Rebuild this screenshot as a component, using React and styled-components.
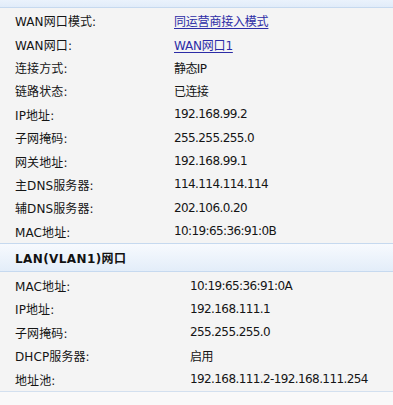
import React from "react";
import styled, { createGlobalStyle } from "styled-components";

const Global = createGlobalStyle`
  html, body { margin: 0; padding: 0; background: #f9f9f9; }
  body {
    font-family: "DejaVu Sans", "Noto Sans CJK SC", sans-serif;
    font-size: 12px;
    color: #151515;
  }
`;

const Page = styled.div`
  width: 393px;
  height: 405px;
  overflow: hidden;
  background: #f9f9f9;
`;

const TopBand = styled.div`
  height: 7px;
  background: linear-gradient(#eaf2fc, #e1ecf9);
  border-bottom: 1px solid #c6d9ef;
`;

const Section = styled.div`
  background: #f4f4f4;
  padding-top: ${(p) => p.$padTop}px;
  border-bottom: ${(p) => (p.$bottomLine ? "1px solid #d3e0ef" : "none")};
`;

const Row = styled.div`
  display: grid;
  grid-template-columns: ${(p) => p.$valueX}px 1fr;
  align-items: center;
  height: 23.4px;
`;

const Label = styled.span`
  padding-left: 15px;
  white-space: nowrap;
  letter-spacing: 0.1px;
`;

const Value = styled.span`
  white-space: nowrap;
  letter-spacing: -0.6px;
`;

const Link = styled.a`
  color: #2c2ca6;
  text-decoration: underline;
  text-underline-offset: 2px;
  letter-spacing: -0.2px;
  cursor: pointer;
`;

const Header = styled.div`
  height: 27px;
  display: flex;
  align-items: center;
  padding-left: 15px;
  border-top: 1px solid #c6d9ef;
  border-bottom: 1px solid #c6d9ef;
  background: linear-gradient(#f7fafe, #e3edf9);
  font-weight: bold;
  letter-spacing: 0.4px;
  color: #111;
`;

const wan = [
  ["WAN网口模式:", "同运营商接入模式", true],
  ["WAN网口:", "WAN网口1", true],
  ["连接方式:", "静态IP"],
  ["链路状态:", "已连接"],
  ["IP地址:", "192.168.99.2"],
  ["子网掩码:", "255.255.255.0"],
  ["网关地址:", "192.168.99.1"],
  ["主DNS服务器:", "114.114.114.114"],
  ["辅DNS服务器:", "202.106.0.20"],
  ["MAC地址:", "10:19:65:36:91:0B"],
];

const lan = [
  ["MAC地址:", "10:19:65:36:91:0A"],
  ["IP地址:", "192.168.111.1"],
  ["子网掩码:", "255.255.255.0"],
  ["DHCP服务器:", "启用"],
  ["地址池:", "192.168.111.2-192.168.111.254"],
];

export default function App() {
  return (
    <Page>
      <Global />
      <TopBand />
      <Section $padTop={1}>
        {wan.map(([l, v, link]) => (
          <Row key={l} $valueX={174}>
            <Label>{l}</Label>
            <Value>{link ? <Link>{v}</Link> : v}</Value>
          </Row>
        ))}
      </Section>
      <Header>LAN(VLAN1)网口</Header>
      <Section $padTop={2} $bottomLine>
        {lan.map(([l, v]) => (
          <Row key={l} $valueX={190}>
            <Label>{l}</Label>
            <Value>{v}</Value>
          </Row>
        ))}
      </Section>
    </Page>
  );
}
